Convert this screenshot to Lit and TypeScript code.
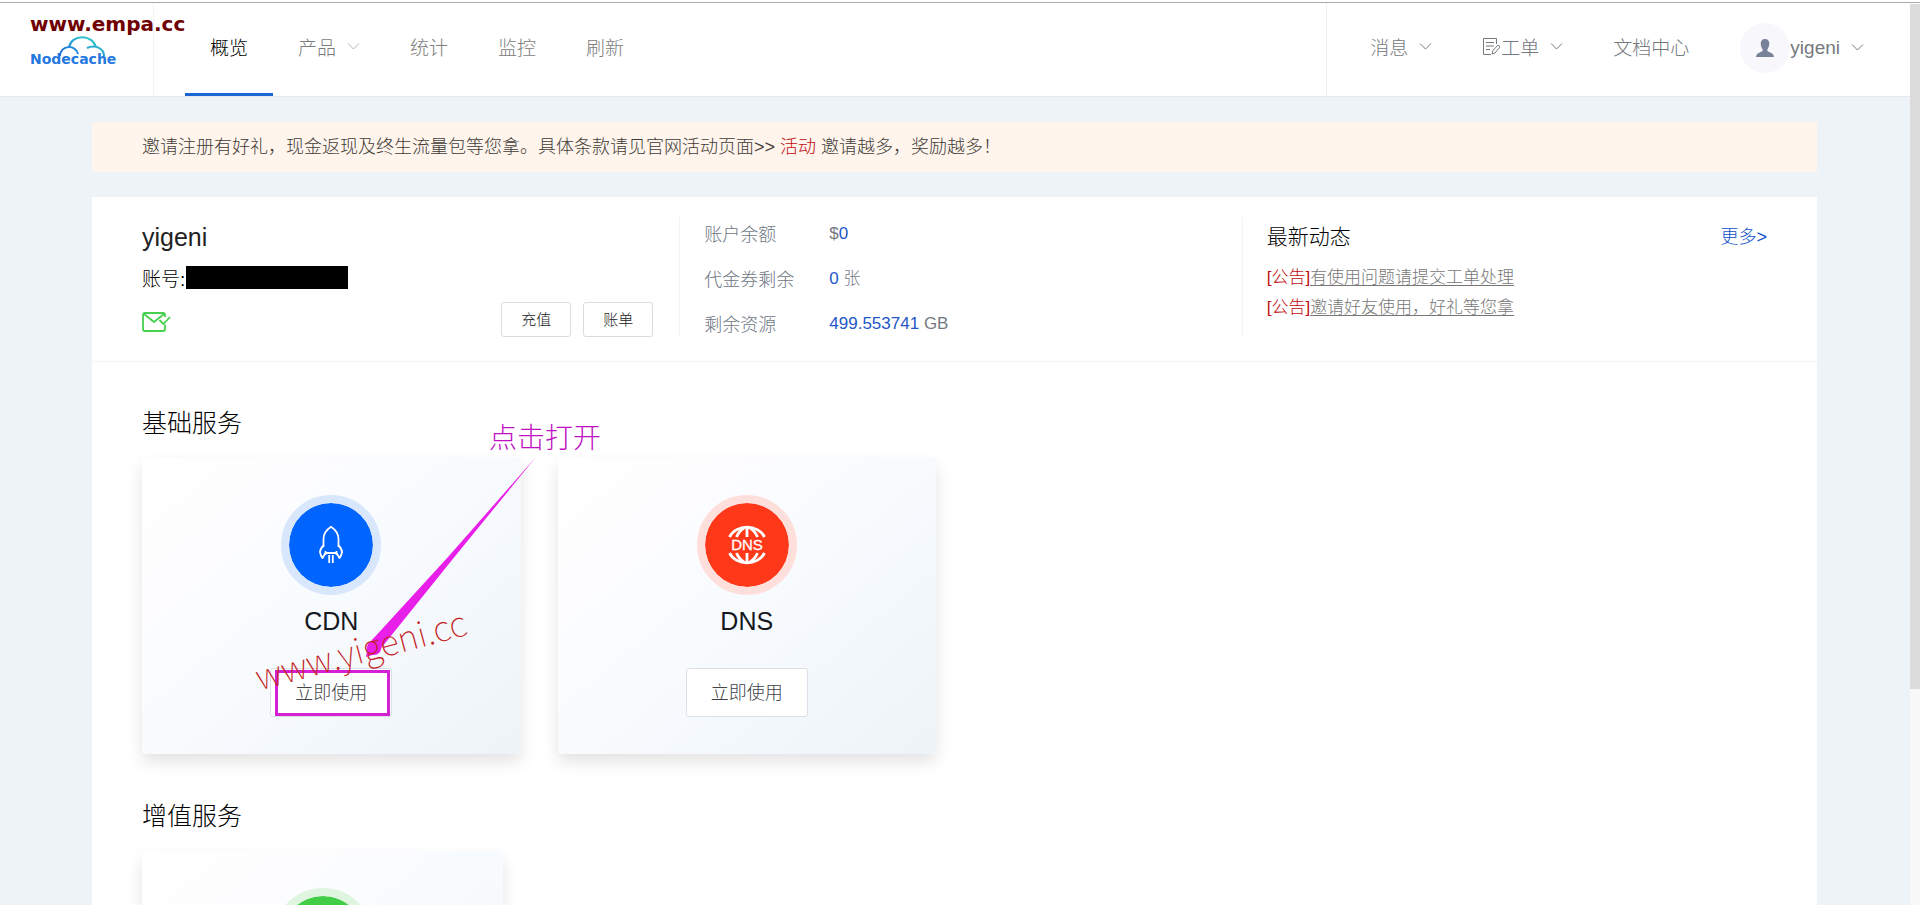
import { LitElement, html, css, svg, nothing } from "lit";
import { customElement, property } from "lit/decorators.js";

const chevron = svg`<path d="M1 1.5 L6.5 7 L12 1.5" fill="none" stroke="currentColor" stroke-width="1" />`;

const rocket = html`<svg width="40" height="40" viewBox="0 0 40 40" fill="none" stroke="#fff" stroke-width="1.8" stroke-linejoin="round" aria-hidden="true">
  <path d="M12.5 22 V14 C12.5 8.5 16 4.5 20 1.8 C24 4.5 27.5 8.5 27.5 14 V22" />
  <path d="M12.5 20.5 C10 23 9 24.500 9 27 C9.500 30 10.500 32 11.500 33 L14.500 28 H25.500 L28.500 33 C29.500 32 30.500 30 31 27 C31 24.500 30 23 27.500 20.500" />
  <path d="M14.500 26 V30 M25.500 26 V30 M18.200 30 V38 M21.800 30 V38" />
</svg>`;

const dnsGlobe = html`<svg width="40" height="40" viewBox="0 0 40 40" fill="none" stroke="#fff" stroke-width="2.800" aria-hidden="true">
  <path d="M2.500 12 C9 -1 31 -1 37.500 12" />
  <path d="M9.500 12 Q12 6 17 3 M30.500 12 Q28 6 23 3 M20 2 V12" />
  <path d="M2.500 28 C9 41 31 41 37.500 28" />
  <path d="M9.500 28 Q12 34 17 37 M30.500 28 Q28 34 23 37 M20 28 V38" />
  <text x="20" y="25" text-anchor="middle" font-family="Liberation Sans, Arial, sans-serif" font-size="15" font-weight="400" fill="#fff" stroke="#fff" stroke-width="0.300">DNS</text>
</svg>`;

const shield = html`<svg width="40" height="40" viewBox="0 0 40 40" fill="none" stroke="#fff" stroke-width="2" aria-hidden="true">
  <path d="M20 3 L34 8 V19 C34 28 28 34 20 37 C12 34 6 28 6 19 V8 Z M13 20 L18 25 L27 15" />
</svg>`;

@customElement("service-card")
export class ServiceCard extends LitElement {
  @property() name = "";
  @property() tone = "blue";

  static styles = css`
    :host {
      display: block;
      position: relative;
    }
    .card {
      box-sizing: border-box;
      height: 296px;
      padding: 37px 20px;
      display: flex;
      flex-direction: column;
      align-items: center;
      border-radius: 4px;
      background: linear-gradient(140deg, #fff 0%, #fdfdff 22%, #f7fbfe 52%, #eef3f8 100%);
      box-shadow: 0 8px 16px rgba(0, 0, 0, 0.11);
    }
    .badge {
      width: 84px;
      height: 84px;
      border-radius: 50%;
      border: 8px solid;
      background-clip: padding-box;
      display: grid;
      place-items: center;
    }
    .blue {
      background-color: #0064ff;
      border-color: #d9e7fd;
    }
    .red {
      background-color: #ff381a;
      border-color: #ffdfdc;
    }
    .green {
      background-color: #41cd46;
      border-color: #dff5e0;
    }
    h3 {
      margin: 8px 0 28px;
      font-size: 25px;
      line-height: 37px;
      font-weight: 400;
      color: #15181d;
    }
    button {
      width: 122px;
      height: 49px;
      flex: none;
      padding: 0 0 4px;
      border: 1px solid #d9e0e8;
      border-radius: 3px;
      background: #fff;
      color: #404348;
      font: inherit;
      font-size: 18px;
      cursor: pointer;
    }
  `;

  render() {
    const icon = this.tone === "blue" ? rocket : this.tone === "red" ? dnsGlobe : shield;
    return html`<article class="card">
        <div class="badge ${this.tone}">${icon}</div>
        ${this.name
          ? html`<h3>${this.name}</h3>
              <button type="button">立即使用</button>`
          : nothing}
      </article>
      <slot></slot>`;
  }
}

@customElement("app-root")
export class AppRoot extends LitElement {
  static styles = css`
    :host {
      display: flex;
      height: 100vh;
      overflow: hidden;
      font-family: "Liberation Sans", "Noto Sans CJK SC", sans-serif;
      font-weight: 300;
      color: #000;
      background: #edf3f7;
    }
    a {
      color: inherit;
      text-decoration: none;
    }
    button {
      font: inherit;
      color: inherit;
      cursor: pointer;
    }
    .page {
      flex: 1;
      min-width: 0;
      overflow-y: auto;
      scrollbar-width: none;
    }
    .rail {
      width: 10px;
      box-sizing: border-box;
      border-top: 1px solid #fff;
      background: #f8f8f8;
    }
    .rail::before {
      content: "";
      display: block;
      height: 76%;
      background: #dcdcdc;
    }
    .frame {
      display: flex;
      flex-direction: column;
      flex: 1;
      min-width: 0;
    }
    .edge {
      height: 2px;
      background: #fff;
      border-bottom: 1px solid #aaa;
    }
    .body {
      flex: 1;
      min-height: 0;
      display: flex;
    }

    header {
      display: flex;
      height: 93px;
      background: #fff;
      border-bottom: 1px solid #e6eaee;
      color: #7c7c7c;
      font-size: 19px;
    }
    .brand {
      width: 154px;
      box-sizing: border-box;
      padding: 9px 0 0 30px;
      border-right: 1px solid #f3f3f3;
      color: #700000;
    }
    .site {
      display: block;
      font: bold 20px/24px "DejaVu Sans", sans-serif;
      white-space: nowrap;
    }
    .logo {
      display: block;
    }
    nav {
      display: flex;
      align-items: stretch;
    }
    .main-nav {
      padding-left: 31px;
      flex: 1;
    }
    .item {
      box-sizing: border-box;
      padding: 0 25px 6px;
      display: flex;
      align-items: center;
      gap: 11px;
      border: 0;
      background: none;
      white-space: nowrap;
    }
    .item.active {
      color: #000;
      border-bottom: 3px solid #1a66d2;
      padding-bottom: 3px;
    }
    .item.light svg {
      color: #b5b5b5;
    }
    .side-nav {
      padding: 0 21px 0 18px;
      border-left: 1px solid #f0f0f0;
      color: #75787d;
    }
    .side-nav .item {
      padding-bottom: 7px;
    }
    .with-icon {
      display: flex;
      align-items: center;
    }
    .side-nav .user {
      padding-left: 26px;
      padding-bottom: 4px;
    }
    .avatar {
      width: 50px;
      height: 50px;
      border-radius: 50%;
      background: #f8f8fc;
      display: grid;
      place-items: center;
    }

    main {
      padding: 25px 93px 60px 92px;
    }
    .notice {
      padding: 0 50px;
      line-height: 50px;
      font-size: 18px;
      background: #fff5ec;
      color: #3f3c38;
    }
    .notice a,
    .tag {
      color: #c00a10;
    }
    .panel {
      margin-top: 25px;
      background: #fff;
    }
    .summary {
      display: grid;
      grid-template-columns: 537fr 562fr 525fr;
      padding: 20px 50px 24px;
      border-bottom: 1px solid #f3f4f6;
    }
    .summary > * {
      height: 120px;
    }
    .account {
      display: grid;
      grid-template-rows: 40px 40px 40px;
      align-items: center;
      padding-right: 26px;
    }
    h1,
    h2 {
      margin: 0;
      font-size: 25px;
      font-weight: 300;
    }
    h1 {
      color: #222;
    }
    .number {
      display: flex;
      align-items: center;
      gap: 1px;
      font-size: 19px;
    }
    .mask {
      width: 162px;
      height: 23px;
      background: #000;
    }
    .actions {
      display: flex;
      justify-content: space-between;
      align-items: end;
      align-self: end;
    }
    .actions > svg {
      margin-bottom: 4px;
    }
    .buttons {
      display: flex;
      gap: 12px;
    }
    .buttons button {
      width: 70px;
      height: 35px;
      padding: 0 0 2px;
      border: 1px solid #dcdcdc;
      border-radius: 3px;
      background: #fff;
      font-size: 15px;
      color: #222;
    }
    .assets {
      margin: 0;
      padding-left: 24px;
      display: grid;
      grid-template-columns: 125px 1fr;
      grid-template-rows: 36px 54px 36px;
      align-items: center;
      border-left: 1px solid #f2f2f4;
      font-size: 17px;
      line-height: 34px;
      color: #75797f;
    }
    .assets dt {
      color: #6d7683;
      font-size: 18px;
    }
    .assets dd {
      margin: 0 0 2px;
    }
    .assets b {
      font-weight: 400;
      color: #2457c8;
    }
    .news {
      padding-left: 24px;
      border-left: 1px solid #f2f2f4;
    }
    .news-head {
      display: flex;
      justify-content: space-between;
      align-items: center;
      height: 36px;
      margin-bottom: 10px;
      font-size: 18px;
    }
    .news-head h2 {
      font-size: 21px;
    }
    .news-head a {
      color: #0d50c8;
    }
    .news ul {
      list-style: none;
      margin: 0;
      padding: 0;
      font-size: 17px;
      line-height: 30px;
      color: #777;
    }
    .news li a {
      text-decoration: underline;
      text-underline-offset: 2px;
    }
    .services {
      padding: 42px 50px 0;
    }
    .services + .services {
      padding-top: 43px;
    }
    .services h2 {
      line-height: 38px;
      margin-bottom: 16px;
    }
    .cards {
      display: grid;
      grid-template-columns: repeat(4, 1fr);
      gap: 37px;
    }
    .cards.loose {
      gap: 60px;
    }

    .note {
      position: absolute;
      pointer-events: none;
    }
    .note-frame {
      left: 133px;
      top: 212px;
      width: 109px;
      height: 40px;
      border: 3px solid #d321d3;
    }
    .note-arrow {
      left: 220px;
      top: -6px;
    }
    .note-text {
      left: 347px;
      top: -40px;
      font-size: 28px;
      line-height: 42px;
      white-space: nowrap;
      color: #c010c4;
    }
    .note-mark {
      left: 110px;
      top: 168px;
      font-family: "Noto Sans CJK SC", sans-serif;
      font-size: 35px;
      line-height: 44px;
      font-weight: 100;
      white-space: nowrap;
      color: #c4201c;
      transform: rotate(-15deg);
    }
  `;

  private arrow() {
    return html`<svg width="13" height="9" viewBox="0 0 13 9" aria-hidden="true">${chevron}</svg>`;
  }

  render() {
    return html`
      <div class="frame">
        <div class="edge"></div>
        <div class="body">
          <div class="page">
            <header>
              <div class="brand">
                <span class="site">www.empa.cc</span>
                <svg class="logo" width="92" height="32" viewBox="0 0 92 32" role="img" aria-label="Nodecache">
                  <defs>
                    <linearGradient id="sky" gradientUnits="userSpaceOnUse" x1="52" y1="0" x2="44" y2="20">
                      <stop offset="0" stop-color="#2cc3c9" />
                      <stop offset="1" stop-color="#2370e0" />
                    </linearGradient>
                  </defs>
                  <g fill="none" stroke="url(#sky)" stroke-width="2">
                    <path d="M39 11 C42 -2 62 -2 66 11" />
                    <path d="M30 20 C30 9 46 8 48 18" />
                    <path d="M57 12 C66 8 74 13 74 20" />
                  </g>
                  <text x="0" y="28" font-family="DejaVu Sans, sans-serif" font-weight="bold" font-size="14" fill="#2478e0">Nodecache</text>
                </svg>
              </div>
              <nav class="main-nav" aria-label="主导航">
                <a class="item active" href="#overview">概览</a>
                <button class="item light" type="button">产品 ${this.arrow()}</button>
                <a class="item" href="#stats">统计</a>
                <a class="item" href="#monitor">监控</a>
                <a class="item" href="#refresh">刷新</a>
              </nav>
              <nav class="side-nav" aria-label="用户导航">
                <button class="item" type="button">消息 ${this.arrow()}</button>
                <button class="item" type="button">
                  <span class="with-icon">
                    <svg width="19" height="19" viewBox="0 0 19 19" fill="none" stroke="currentColor" aria-hidden="true">
                      <path d="M14.500 7 V1.500 H1.500 V17.500 H9 M4 5.500 H12 M4 9 H12 M4 12.500 H8 M10 17 L11 13.500 L16 8 L18 10 L13 16 Z" />
                    </svg>工单</span>
                  ${this.arrow()}
                </button>
                <a class="item" href="#docs">文档中心</a>
                <button class="item user" type="button">
                  <span class="with-icon">
                    <span class="avatar">
                      <svg width="20" height="18" viewBox="0 0 20 18" fill="#77829a" aria-hidden="true">
                        <path d="M10 0 C13 0 14.500 2 14.300 5 C14.100 8 12.500 9.500 12.200 11.500 C12.200 13 19 13.500 19 18 H1 C1 13.500 7.800 13 7.800 11.500 C7.500 9.500 5.900 8 5.700 5 C5.500 2 7 0 10 0 Z" />
                      </svg>
                    </span>yigeni</span>
                  ${this.arrow()}
                </button>
              </nav>
            </header>

            <main>
              <div class="notice">
                邀请注册有好礼，现金返现及终生流量包等您拿。具体条款请见官网活动页面&gt;&gt;
                <a href="#activity">活动</a> 邀请越多，奖励越多！
              </div>

              <div class="panel">
                <div class="summary">
                  <section class="account">
                    <h1>yigeni</h1>
                    <div class="number">账号:<span class="mask"></span></div>
                    <div class="actions">
                      <svg width="29" height="22" viewBox="0 0 29 22" fill="none" stroke="#45d04d" stroke-width="1.800" stroke-linejoin="round" aria-label="邮箱已验证" role="img">
                        <path d="M23 13.500 V18 Q23 20 21 20 H3 Q1 20 1 18 V4 Q1 2 3 2 H21 Q23 2 23 4 V6" />
                        <path d="M2 3 L12 11 L22 3 M17.500 9 L21.500 13 L28 6" />
                      </svg>
                      <div class="buttons">
                        <button type="button">充值</button>
                        <button type="button">账单</button>
                      </div>
                    </div>
                  </section>
                  <dl class="assets">
                    <dt>账户余额</dt>
                    <dd>$<b>0</b></dd>
                    <dt>代金券剩余</dt>
                    <dd><b>0</b> 张</dd>
                    <dt>剩余资源</dt>
                    <dd><b>499.553741</b> GB</dd>
                  </dl>
                  <section class="news">
                    <div class="news-head">
                      <h2>最新动态</h2>
                      <a href="#news">更多&gt;</a>
                    </div>
                    <ul>
                      <li><span class="tag">[公告]</span><a href="#n1">有使用问题请提交工单处理</a></li>
                      <li><span class="tag">[公告]</span><a href="#n2">邀请好友使用，好礼等您拿</a></li>
                    </ul>
                  </section>
                </div>

                <section class="services">
                  <h2>基础服务</h2>
                  <div class="cards">
                    <service-card name="CDN" tone="blue">
                      <div class="note note-frame"></div>
                      <svg class="note note-arrow" width="176" height="206" viewBox="0 0 176 206" aria-hidden="true">
                        <path d="M174 5 L90 108 L20 195 L10 188 L86 105 Z" fill="#e81fe8" />
                        <path d="M20 195 L17 201 L4 205 L6 192 L11 187 Z" fill="#e81fe8" />
                        <circle cx="12" cy="196" r="7" fill="#e81fe8" />
                      </svg>
                      <span class="note note-text">点击打开</span>
                      <span class="note note-mark">www.yigeni.cc</span>
                    </service-card>
                    <service-card name="DNS" tone="red"></service-card>
                  </div>
                </section>

                <section class="services">
                  <h2>增值服务</h2>
                  <div class="cards loose">
                    <service-card tone="green"></service-card>
                  </div>
                </section>
              </div>
            </main>
          </div>
          <div class="rail"></div>
        </div>
      </div>
    `;
  }
}
